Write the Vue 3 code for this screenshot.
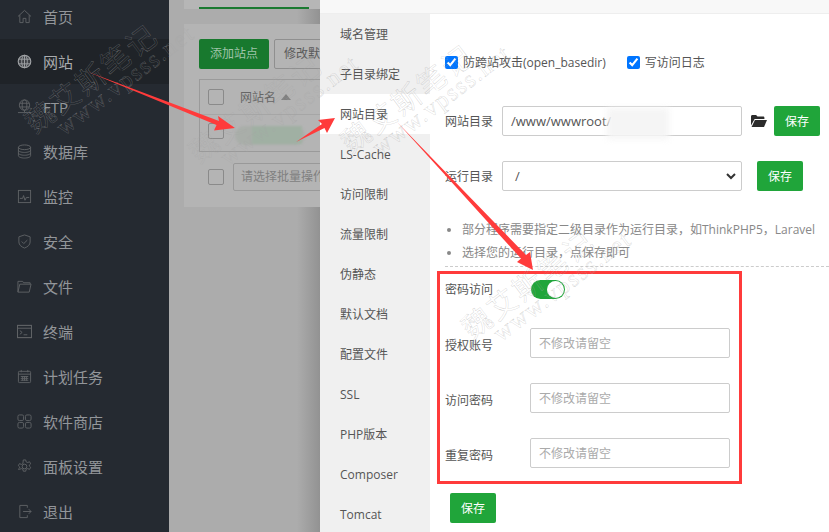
<template>
  <div class="page">
    <aside class="sidebar">
      <div v-for="item in menus" :key="item.name" class="menu-item" :class="{ active: item.name === '网站' }">
        <svg class="menu-icon" viewBox="0 0 16 16" fill="none" stroke="currentColor" stroke-width="1" v-html="item.icon"></svg>
        <span>{{ item.name }}</span>
      </div>
    </aside>

    <main class="site-bg">
      <div class="top-card"><i></i></div>
      <div class="site-card">
        <div class="btn-row">
          <span class="bg-btn">添加站点</span>
          <span class="bg-btn plain">修改默认页</span>
        </div>
        <div class="bg-table">
          <div class="bg-head">
            <span class="bg-check"></span>
            <span class="bg-name">网站名</span>
            <span class="bg-sort"></span>
          </div>
          <div class="bg-row">
            <span class="bg-check"></span>
            <div class="bg-smudge"><i></i></div>
          </div>
        </div>
        <div class="bg-batch">
          <span class="bg-check"></span>
          <span class="bg-select">请选择批量操作</span>
        </div>
      </div>
    </main>

    <section class="panel">
      <div class="panel-title"></div>
      <div class="panel-body">
        <ul class="tabs">
          <li v-for="tab in tabs" :key="tab" :class="{ on: tab === '网站目录' }">{{ tab }}</li>
        </ul>

        <div class="content">
          <div class="checks">
            <label><input type="checkbox" checked />防跨站攻击(open_basedir)</label>
            <label><input type="checkbox" checked />写访问日志</label>
          </div>

          <div class="dir-row first">
            <span class="dir-label">网站目录</span>
            <div class="path-box">
              /www/wwwroot/
              <div class="path-blur"></div>
            </div>
            <svg class="folder" viewBox="0 0 16 14">
              <path d="M0 2.5C0 1.6.6 1 1.4 1h3.7l1.4 1.6h5.6c.8 0 1.3.5 1.3 1.2V5H3.6L0 11.5z" fill="#2b2b2b" />
              <path d="M3.9 6H16l-3 7H.6z" fill="#2b2b2b" />
            </svg>
            <button class="save">保存</button>
          </div>

          <div class="dir-row second">
            <span class="dir-label">运行目录</span>
            <div class="path-box select">
              <span>/</span>
              <svg viewBox="0 0 10 7" width="10" height="7" fill="none" stroke="#333" stroke-width="2">
                <path d="M1 1l4 4 4-4" />
              </svg>
            </div>
            <button class="save run">保存</button>
          </div>

          <ul class="notes">
            <li>部分程序需要指定二级目录作为运行目录，如ThinkPHP5，Laravel</li>
            <li>选择您的运行目录，点保存即可</li>
          </ul>

          <div class="dashed"></div>

          <div class="auth-box">
            <div class="auth-toggle">
              <span>密码访问</span>
              <span class="switch"><i></i></span>
            </div>
            <div v-for="f in authFields" :key="f" class="auth-row">
              <span class="auth-label">{{ f }}</span>
              <input placeholder="不修改请留空" />
            </div>
          </div>

          <button class="save final">保存</button>
        </div>
      </div>
    </section>

    <!-- 水印 -->
    <div v-for="(w, i) in marks" :key="i" class="watermark" :style="{ left: w[0] + 'px', top: w[1] + 'px' }">
      <div class="wm-cn">魏艾斯笔记</div>
      <div class="wm-en">www.vpsss.net</div>
    </div>

    <!-- 红色箭头 -->
    <svg class="arrows" viewBox="0 0 829 532" width="829" height="532">
      <path d="M87 71.5L219 121L218 116L235 128L214 130.5L216.5 125Z" fill="#ff3b3b" />
      <path d="M296 142L322 124L318 120L335 118L327 133L324.5 128Z" fill="#ff3b3b" />
      <path d="M397 122L526 255L530 252L533 270L517 262L521 258.5Z" fill="#ff3b3b" />
    </svg>
  </div>
</template>

<script setup>
const menus = [
  { name: '首页', icon: '<path d="M1 8L8 1.500l7 6.500M3 6.500V14.500h3.500v-4.500h3v4.500H13V6.500"/>' },
  { name: '网站', icon: '<circle cx="8" cy="8" r="6.700" fill="#9a9da1" fill-opacity=".25" stroke-width="1.200"/><ellipse cx="8" cy="8" rx="3" ry="6.700"/><path d="M1.500 5.500h13M1.500 10.500h13M8 1.300v13.400"/>' },
  { name: 'FTP', icon: '<circle cx="8" cy="6.500" r="5.500"/><ellipse cx="8" cy="6.500" rx="2.500" ry="5.500"/><path d="M3 4.500h10M3 8.500h10M8 12v2M1 14.500h14"/>' },
  { name: '数据库', icon: '<ellipse cx="8" cy="3.500" rx="6.500" ry="2.500"/><path d="M1.500 3.500v9c0 1.400 2.900 2.500 6.500 2.500s6.500-1.100 6.500-2.500v-9M1.500 6.500C1.500 7.900 4.400 9 8 9s6.500-1.100 6.500-2.500M1.500 9.500C1.500 10.900 4.400 12 8 12s6.500-1.100 6.500-2.500"/>' },
  { name: '监控', icon: '<rect x="1.500" y="1.500" width="13" height="13"/><path d="M3 10h3l1-3 1.500 5 1.500-3h3"/>' },
  { name: '安全', icon: '<path d="M8 1l6 2v5.500c0 3-2.500 5.200-6 6.500-3.500-1.300-6-3.500-6-6.500V3z"/><path d="M5 8l2.200 2.200L11 6.500"/>' },
  { name: '文件', icon: '<path d="M1 14V2.500h5l1 1.500h7v1.500M1 14h12l2-8.500H3z"/>' },
  { name: '终端', icon: '<rect x=".5" y="1.500" width="15" height="13" stroke-width="1.200"/><path d="M.5 4.500h15M3 7l2.500 2L3 11M7 11.500h4"/>' },
  { name: '计划任务', icon: '<rect x="1.500" y="2.500" width="13" height="12" rx="1"/><path d="M4.500 1v2.500M11.500 1v2.500M1.500 5.500h13M4 8h8M4 10h8M4 12h8M6 7.500v5M8 7.500v5M10 7.500v5" />' },
  { name: '软件商店', icon: '<rect x="1" y="1" width="6" height="6" rx="1.500"/><rect x="9" y="1" width="6" height="6" rx="1.500"/><rect x="1" y="9" width="6" height="6" rx="1.500"/><rect x="9" y="9" width="6" height="6" rx="1.500"/>' },
  { name: '面板设置', icon: '<circle cx="8" cy="8" r="2.500"/><path d="M6.700 1h2.600l.4 2 1.700.8 1.900-.9 1.300 2.200-1.500 1.400v1l1.500 1.400-1.300 2.200-1.900-.9-1.700.8-.4 2H6.700l-.4-2-1.700-.8-1.900.9L1.400 10.900l1.500-1.400v-1L1.400 7.100l1.300-2.200 1.900.9 1.700-.8z"/>' },
  { name: '退出', icon: '<path d="M11 4V1.500H3v13h8V12M6.500 8H15M12.500 5.500L15 8l-2.500 2.500"/>' },
]

const tabs = ['域名管理', '子目录绑定', '网站目录', 'LS-Cache', '访问限制', '流量限制', '伪静态', '默认文档', '配置文件', 'SSL', 'PHP版本', 'Composer', 'Tomcat']

const authFields = ['授权账号', '访问密码', '重复密码']

// 水印摆放位置
const marks = [
  [18, 112],
  [182, 142],
  [334, 132],
  [455, 318],
]
</script>

<style>
html, body {
  margin: 0;
  overflow: hidden;
}
</style>

<style scoped>
.page {
  position: relative;
  display: flex;
  width: 829px;
  height: 532px;
  overflow: hidden;
  font-family: "Open Sans", "Noto Sans CJK SC", sans-serif;
  font-size: 12px;
  color: #555;
}

.sidebar {
  flex: 0 0 169px;
  background: #252a31;
  margin-top: -6px;
}
.menu-item {
  display: flex;
  align-items: center;
  height: 45px;
  padding-left: 17px;
  gap: 11px;
  color: #93969a;
  font-size: 15px;
}
.menu-item.active {
  background: #1f2328;
  color: #a9abae;
}
.menu-icon {
  width: 15px;
  height: 15px;
  color: #5f6265;
  flex: none;
}
.menu-item.active .menu-icon {
  color: #a0a3a6;
}

.site-bg {
  flex: 0 0 151px;
  min-width: 0;
  overflow: hidden;
  background: linear-gradient(to right, #acacac 0, #acacac 128px, #929292 100%);
}
.top-card {
  height: 9px;
  margin-left: 15px;
  background: #b6b6b6;
  position: relative;
}
.top-card i {
  display: block;
  position: absolute;
  left: 15px;
  bottom: 0;
  width: 110px;
  height: 2px;
  background: #1b7a31;
}
.site-card {
  margin: 15px 0 0 15px;
  height: 183px;
  padding: 15px 0 0 15px;
  background: #b4b4b4;
  box-sizing: border-box;
  overflow: hidden;
}
.btn-row {
  display: flex;
  gap: 5px;
  white-space: nowrap;
}
.bg-btn {
  flex: none;
  width: 70px;
  height: 30px;
  line-height: 30px;
  text-align: center;
  background: #18792e;
  color: #9fc4a9;
  border-radius: 2px;
}
.bg-btn.plain {
  width: 80px;
  background: none;
  color: #5a5a5a;
  border: 1px solid #8f8f8f;
  box-sizing: border-box;
  line-height: 28px;
}
.bg-table {
  width: 130px;
  margin-top: 10px;
  border: 1px solid #9a9a9a;
  border-right: 0;
  box-sizing: border-box;
}
.bg-head {
  display: flex;
  align-items: center;
  height: 34px;
  padding-left: 8px;
  border-bottom: 1px solid #a6a6a6;
}
.bg-check {
  flex: none;
  width: 14px;
  height: 14px;
  border: 1px solid #8a8a8a;
  border-radius: 2px;
}
.bg-name {
  margin-left: 16px;
  color: #666;
}
.bg-sort {
  margin-left: 5px;
  border: 5px solid transparent;
  border-bottom: 6px solid #808080;
  border-top: 0;
}
.bg-row {
  position: relative;
  display: flex;
  align-items: center;
  height: 36px;
  padding-left: 8px;
}
.bg-row .bg-check {
  margin-top: -4px;
}
.bg-smudge {
  position: absolute;
  left: 35px;
  top: 11px;
  width: 70px;
  height: 19px;
  background: #a9aea9;
  border-radius: 10px;
  filter: blur(1px);
}
.bg-smudge i {
  display: block;
  width: 50px;
  height: 18px;
  margin-left: 17px;
  background: #a0b0a3;
}
.bg-batch {
  display: flex;
  align-items: center;
  gap: 9px;
  margin-top: 11px;
  padding-left: 9px;
}
.bg-select {
  flex: none;
  width: 110px;
  height: 28px;
  line-height: 26px;
  padding-left: 7px;
  border: 1px solid #999;
  border-radius: 2px;
  box-sizing: border-box;
  color: #808080;
  white-space: nowrap;
  overflow: hidden;
}

.panel {
  flex: 0 0 509px;
  background: #fff;
  display: flex;
  flex-direction: column;
  min-width: 0;
}
.panel-title {
  flex: none;
  height: 13px;
  background: #f8f8f8;
  border-bottom: 1px solid #eee;
}
.panel-body {
  flex: 1;
  display: flex;
  min-height: 0;
}
.tabs {
  flex: 0 0 110px;
  margin: 0;
  padding: 0;
  list-style: none;
  background: #f0f0f0;
}
.tabs li {
  height: 40px;
  line-height: 41px;
  padding-left: 20px;
  color: #555;
  white-space: nowrap;
}
.tabs li.on {
  background: #fff;
}

.content {
  flex: 1;
  padding: 0 0 0 15px;
  min-width: 0;
}
.checks {
  display: flex;
  gap: 21px;
  padding-top: 40px;
  height: 16px;
  align-items: center;
}
.checks label {
  display: flex;
  align-items: center;
  gap: 5px;
}
.checks input {
  margin: 0;
  width: 13px;
  height: 13px;
  accent-color: #0075ff;
}
.dir-row {
  display: flex;
  align-items: center;
}
.dir-row.first {
  margin-top: 36px;
  height: 30px;
}
.dir-row.second {
  margin-top: 25px;
  height: 30px;
}
.dir-label {
  flex: 0 0 57px;
}
.path-box {
  flex: 0 0 240px;
  position: relative;
  height: 30px;
  line-height: 28px;
  padding-left: 8px;
  border: 1px solid #ccc;
  border-radius: 2px;
  box-sizing: border-box;
  white-space: nowrap;
  font-size: 13px;
}
.path-box.select {
  display: flex;
  align-items: center;
  justify-content: space-between;
  padding: 0 5px 0 12px;
}
.path-blur {
  position: absolute;
  left: 104px;
  top: 1px;
  width: 62px;
  height: 31px;
  background: #f5f5f5;
  filter: blur(3px);
}
.folder {
  flex: none;
  width: 16px;
  height: 14px;
  margin-left: 9px;
}
.save {
  flex: none;
  width: 46px;
  height: 30px;
  padding: 0;
  border: 0;
  border-radius: 2px;
  background: #20a53a;
  color: #fff;
  font: inherit;
  font-size: 12px;
}
.dir-row .save {
  margin-left: 7px;
}
.dir-row .save.run {
  margin-left: 15px;
}
.notes {
  margin: 27px 0 0;
  padding: 0 0 0 2px;
  list-style: none;
  color: #888;
  white-space: nowrap;
}
.notes li {
  display: flex;
  align-items: center;
  gap: 11px;
  height: 23px;
  line-height: 23px;
}
.notes li::before {
  content: "";
  flex: none;
  width: 4px;
  height: 4px;
  border-radius: 50%;
  background: #888;
}
.dashed {
  margin-top: 2px;
  border-top: 1px dashed #ccc;
}
.auth-box {
  width: 305px;
  height: 213px;
  margin: 4px 0 0 -8px;
  padding: 5px 5px 0;
  border: 3px solid #ff3b3b;
  box-sizing: border-box;
}
.auth-toggle {
  display: flex;
  align-items: center;
  height: 20px;
}
.auth-toggle > span:first-child {
  flex: 0 0 86px;
}
.switch {
  display: block;
  position: relative;
  width: 34px;
  height: 19px;
  border-radius: 10px;
  background: #20a53a;
}
.switch i {
  position: absolute;
  right: 1px;
  top: 1px;
  width: 17px;
  height: 17px;
  border-radius: 50%;
  background: #fff;
}
.auth-row {
  display: flex;
  height: 30px;
  margin-top: 25px;
  align-items: flex-end;
}
.auth-toggle + .auth-row {
  margin-top: 29px;
}
.auth-label {
  flex: 0 0 85px;
  line-height: 24px;
}
.auth-row input {
  width: 200px;
  height: 30px;
  padding: 0 8px;
  border: 1px solid #ccc;
  border-radius: 2px;
  box-sizing: border-box;
  font: inherit;
  outline: none;
}
.auth-row input::placeholder {
  color: #aaa;
}
.save.final {
  display: block;
  margin: 9px 0 0 5px;
}

.watermark {
  position: absolute;
  width: 200px;
  transform: rotate(-37deg);
  transform-origin: 0 0;
  pointer-events: none;
  color: transparent;
  -webkit-text-stroke: 0.3px rgba(165, 165, 165, 0.65);
  white-space: nowrap;
}
.wm-cn {
  font-family: "Noto Sans CJK SC", sans-serif;
  font-size: 29px;
  line-height: 30px;
  letter-spacing: 2.5px;
}
.wm-en {
  margin: -4px 0 0 22px;
  font-family: "Liberation Serif", serif;
  font-size: 24px;
  line-height: 26px;
  letter-spacing: 1.7px;
}
.arrows {
  position: absolute;
  left: 0;
  top: 0;
  pointer-events: none;
}
</style>
